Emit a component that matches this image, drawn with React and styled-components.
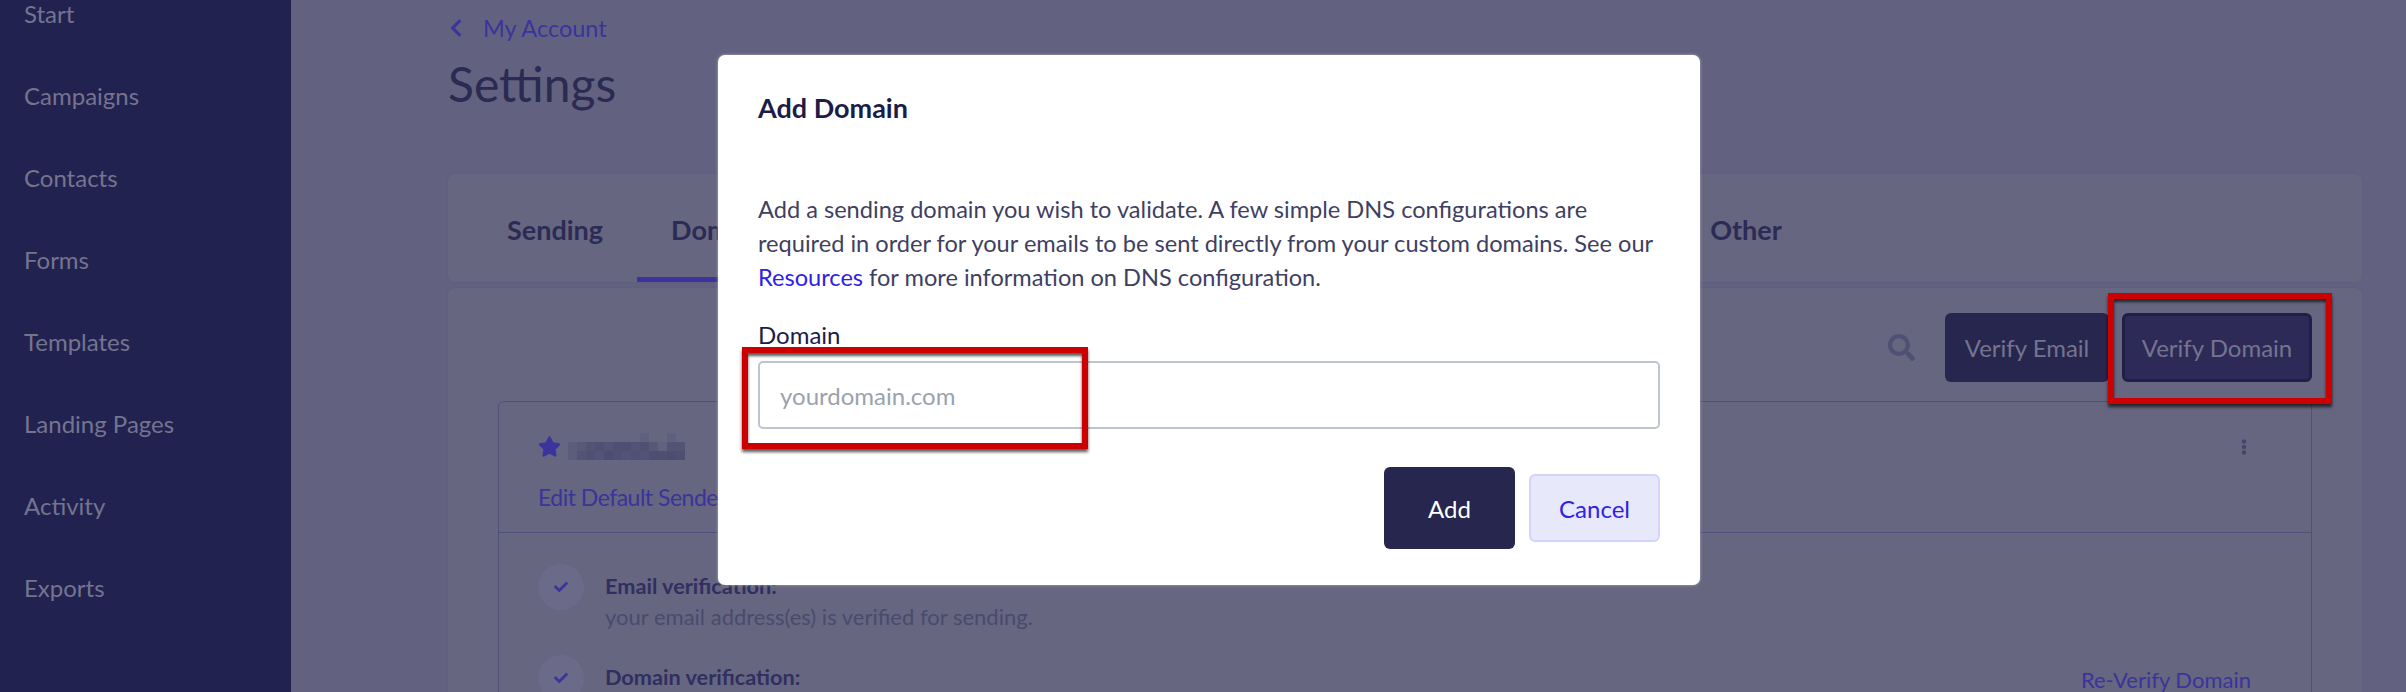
import React from "react";
import styled, { createGlobalStyle } from "styled-components";
import { FaSearch, FaStar, FaCheck, FaChevronLeft, FaEllipsisV } from "react-icons/fa";

const GlobalStyle = createGlobalStyle`
    html, body {
        margin: 0;
        padding: 0;
        background: #626280;
    }
    * {
        box-sizing: border-box;
    }
    body {
        font-family: "Lato", "Noto Sans", sans-serif;
    }
`;

const Page = styled.div`
    position: relative;
    display: flex;
    width: 2406px;
    height: 692px;
    overflow: hidden;
    background: #626280;
`;

const Sidebar = styled.nav`
    display: flex;
    flex-direction: column;
    flex: 0 0 291px;
    row-gap: 54px;
    padding-left: 24px;
    background: #222250;
`;

const SideItem = styled.a`
    height: 28px;
    font-size: 24px;
    line-height: 28px;
    color: #74748f;
`;

const Main = styled.main`
    flex: 1;
    display: flex;
    flex-direction: column;
    padding: 14px 44px 0 157px;
    min-width: 0;
`;

const Crumb = styled.a`
    display: flex;
    align-items: center;
    height: 30px;
    font-size: 23.5px;
    color: #3a349c;

    svg {
        width: 16px;
        height: 20px;
        margin: 0 19px 0 0;
    }
`;

const Title = styled.h1`
    margin: 14px 0 62px;
    font-size: 48px;
    font-weight: 400;
    line-height: 56px;
    color: #2a2a52;
`;

const TabsCard = styled.div`
    display: flex;
    height: 109px;
    margin-bottom: 6px;
    padding-left: 25px;
    border-radius: 6px;
    background: #666680;
    box-shadow: 0 0 2px #5a5a79;
`;

const Tab = styled.a`
    display: flex;
    align-items: center;
    height: 108px;
    margin-left: ${(p) => p.$offset || 0}px;
    padding: 8px 34px 0;
    font-size: 27px;
    font-weight: 700;
    color: #2b2b56;
    border-bottom: 5px solid ${(p) => (p.$active ? "#3a349c" : "transparent")};
`;

const ListCard = styled.div`
    flex: 1;
    padding: 0 50px;
    border-radius: 6px 6px 0 0;
    background: #666680;
    box-shadow: 0 0 2px #5a5a79;
`;

const Toolbar = styled.div`
    display: flex;
    align-items: center;
    justify-content: flex-end;
    column-gap: 13px;
    padding: 25px 0 19px;
`;

const SearchIcon = styled(FaSearch)`
    width: 27px;
    height: 27px;
    margin-right: 17px;
    color: #505075;
`;

const ToolButton = styled.button`
    width: ${(p) => p.$width}px;
    height: 69px;
    padding: 0;
    border: ${(p) => (p.$focused ? "3px solid #1f1f48" : "none")};
    border-radius: 6px;
    font: inherit;
    font-size: 24px;
    color: #74748f;
    background: ${(p) => (p.$focused ? "#2d2a58" : "#26264f")};
`;

const DomainCard = styled.section`
    height: 400px;
    border: 1px solid #50507a;
    border-radius: 6px 6px 0 0;
`;

const DomainHead = styled.div`
    display: flex;
    justify-content: space-between;
    height: 131px;
    padding: 30px 64px 0 39px;
    border-bottom: 1px solid #50507a;
`;

const DomainName = styled.div`
    display: flex;
    align-items: center;
    column-gap: 7px;
    height: 28px;
    color: #3a349c;
`;

const StarIcon = styled(FaStar)`
    width: 23px;
    height: 23px;
`;

const EditLink = styled.a`
    display: block;
    margin-top: 22px;
    font-size: 23px;
    letter-spacing: -0.5px;
    line-height: 30px;
    color: #3a349c;
`;

const MenuIcon = styled(FaEllipsisV)`
    width: 6px;
    height: 18px;
    margin-top: 6px;
    color: #45456c;
`;

const Checks = styled.div`
    display: flex;
    flex-direction: column;
    row-gap: 22px;
    padding: 31px 60px 0 39px;
`;

const CheckRow = styled.div`
    display: flex;
    column-gap: 21px;
`;

const CheckCircle = styled.span`
    display: flex;
    flex: 0 0 46px;
    align-items: center;
    justify-content: center;
    height: 46px;
    border-radius: 50%;
    color: #3a349c;
    background: #6b6b89;

    svg {
        width: 14px;
        height: 14px;
    }
`;

const CheckText = styled.div`
    flex: 1;
    padding-top: 7px;
`;

const CheckTitle = styled.div`
    font-size: 21.7px;
    font-weight: 700;
    line-height: 30px;
    color: #2f2f60;
`;

const CheckHint = styled.div`
    font-size: 22px;
    line-height: 32px;
    color: #4a4a6e;
`;

const ReVerify = styled.a`
    margin-top: 10px;
    font-size: 22px;
    line-height: 30px;
    color: #3a349c;
`;

const Modal = styled.div`
    position: absolute;
    top: 55px;
    left: 718px;
    display: flex;
    flex-direction: column;
    width: 982px;
    height: 530px;
    padding: 36px 40px 0;
    border-radius: 7px;
    background: #fff;
    box-shadow: 0 0 3px #a9b3c4;
`;

const ModalTitle = styled.h2`
    margin: 0 0 67px;
    font-size: 27px;
    font-weight: 700;
    line-height: 34px;
    color: #1c1c48;
`;

const ModalText = styled.p`
    margin: 0 0 28px;
    font-size: 23.6px;
    line-height: 34px;
    color: #3f3f62;
`;

const ModalLink = styled.a`
    color: #2f22e6;
`;

const Label = styled.label`
    display: block;
    height: 26px;
    margin-bottom: 13px;
    font-size: 24px;
    line-height: 26px;
    color: #1c1c48;
`;

const DomainInput = styled.input`
    flex: 0 0 68px;
    width: 100%;
    padding: 0 20px;
    border: 2px solid #bcc5d0;
    border-radius: 5px;
    font: inherit;
    font-size: 24px;
    outline: none;

    &::placeholder {
        color: #9aa3ad;
    }
`;

const ModalActions = styled.div`
    display: flex;
    align-items: center;
    justify-content: flex-end;
    column-gap: 14px;
    margin-top: 38px;
`;

const AddButton = styled.button`
    width: 131px;
    height: 82px;
    border: none;
    border-radius: 6px;
    font: inherit;
    font-size: 24px;
    color: #fff;
    background: #26264f;
`;

const CancelButton = styled.button`
    width: 131px;
    height: 68px;
    border: 2px solid #d3d3fb;
    border-radius: 6px;
    font: inherit;
    font-size: 24px;
    color: #2f22e6;
    background: #e8e8fb;
`;

const Callout = styled.div`
    position: absolute;
    top: ${(p) => p.$top}px;
    left: ${(p) => p.$left}px;
    width: ${(p) => p.$width}px;
    height: ${(p) => p.$height}px;
    border: 6px solid #cc0000;
    box-shadow: 0 3px 3px rgba(0, 0, 0, 0.65), inset 0 3px 3px rgba(0, 0, 0, 0.65);
`;

// pixelated sender name, same mosaic as the screenshot
const MOSAIC = [
    [0, 0, 0, 0, 0, 0, 0, 0, 0, 0, 0, 0, 0].map((_, i) => (i === 8 || i === 11 ? "#5f5f7e" : null)),
    ["#5c5c7c", "#585879", "#535376", "#505074", "#535376", "#505074", "#4f4f73", "#535376", "#505074", "#585879", "#626280", "#535376", "#535376"],
    ["#5c5c7c", "#535376", "#505074", "#535376", "#4d4d71", "#505074", "#535376", "#505074", "#535376", "#4f4f73", "#4f4f73", "#4d4d71", "#4f4f73"],
];

const Mosaic = () => (
    <svg width="117" height="27" viewBox="0 0 117 27">
        {MOSAIC.map((row, y) =>
            row.map((c, x) => c && <rect key={`${x}-${y}`} x={x * 9} y={y * 9} width="9" height="9" fill={c} />)
        )}
    </svg>
);

const NAV = ["Start", "Campaigns", "Contacts", "Forms", "Templates", "Landing Pages", "Activity", "Exports"];

const App = () => (
    <Page>
        <GlobalStyle />
        <Sidebar>
            {NAV.map((n) => (
                <SideItem key={n}>{n}</SideItem>
            ))}
        </Sidebar>
        <Main>
            <Crumb>
                <FaChevronLeft />
                My Account
            </Crumb>
            <Title>Settings</Title>
            <TabsCard>
                <Tab>Sending</Tab>
                <Tab $active>Domains</Tab>
                <Tab $offset={865}>Other</Tab>
            </TabsCard>
            <ListCard>
                <Toolbar>
                    <SearchIcon />
                    <ToolButton $width={164}>Verify Email</ToolButton>
                    <ToolButton $width={190} $focused>
                        Verify Domain
                    </ToolButton>
                </Toolbar>
                <DomainCard>
                    <DomainHead>
                        <div>
                            <DomainName>
                                <StarIcon />
                                <Mosaic />
                            </DomainName>
                            <EditLink>Edit Default Sender</EditLink>
                        </div>
                        <MenuIcon />
                    </DomainHead>
                    <Checks>
                        <CheckRow>
                            <CheckCircle>
                                <FaCheck />
                            </CheckCircle>
                            <CheckText>
                                <CheckTitle>Email verification:</CheckTitle>
                                <CheckHint>your email address(es) is verified for sending.</CheckHint>
                            </CheckText>
                        </CheckRow>
                        <CheckRow>
                            <CheckCircle>
                                <FaCheck />
                            </CheckCircle>
                            <CheckText>
                                <CheckTitle>Domain verification:</CheckTitle>
                            </CheckText>
                            <ReVerify>Re-Verify Domain</ReVerify>
                        </CheckRow>
                    </Checks>
                </DomainCard>
            </ListCard>
        </Main>
        <Modal>
            <ModalTitle>Add Domain</ModalTitle>
            <ModalText>
                Add a sending domain you wish to validate. A few simple DNS configurations are required in order for
                your emails to be sent directly from your custom domains. See our <ModalLink>Resources</ModalLink> for
                more information on DNS configuration.
            </ModalText>
            <Label>Domain</Label>
            <DomainInput placeholder="yourdomain.com" />
            <ModalActions>
                <AddButton>Add</AddButton>
                <CancelButton>Cancel</CancelButton>
            </ModalActions>
        </Modal>
        <Callout $top={293} $left={2108} $width={224} $height={111} />
        <Callout $top={347} $left={742} $width={346} $height={102} />
    </Page>
);

export default App;
